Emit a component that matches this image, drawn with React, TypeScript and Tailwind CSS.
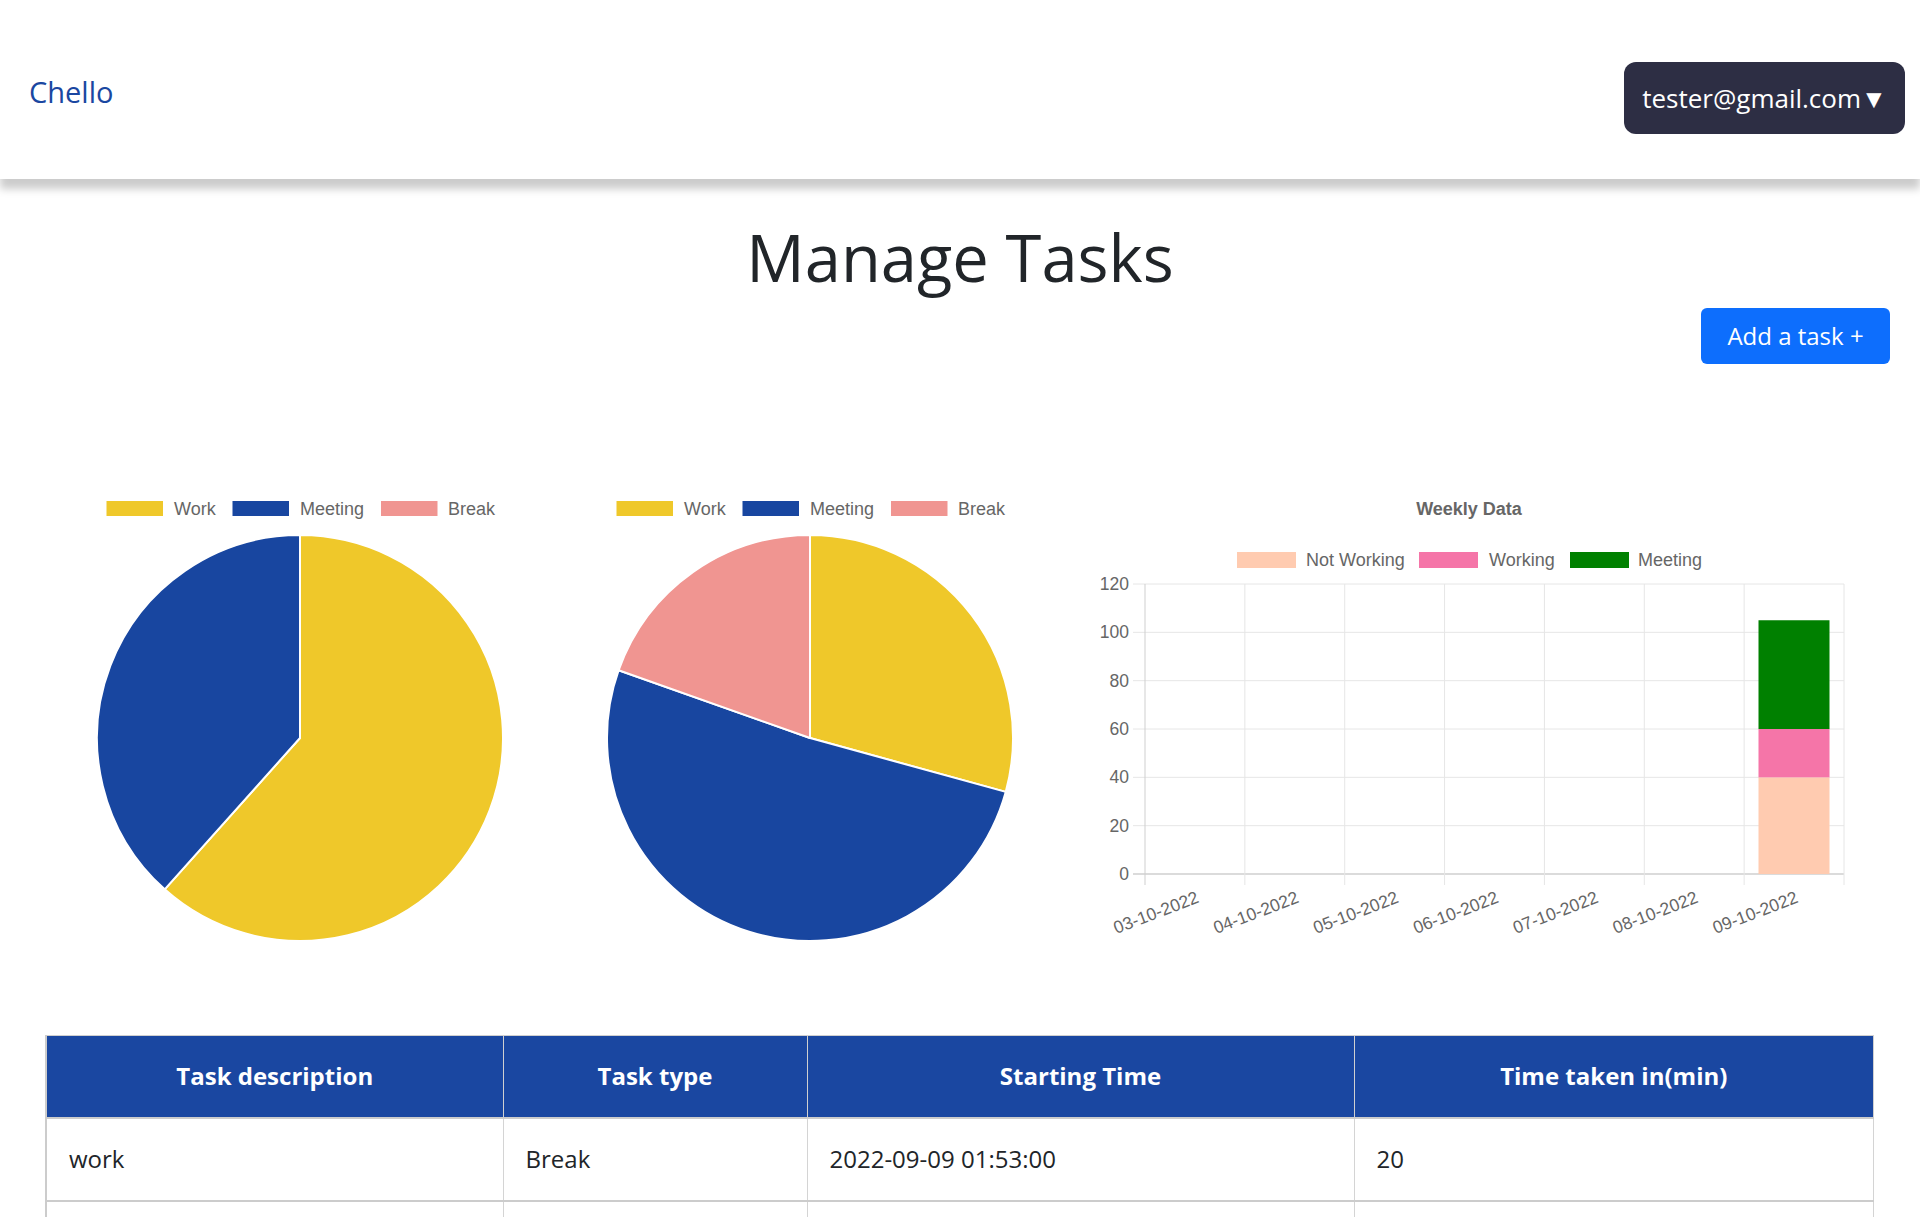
import React from "react";

const BLUE = "#1846a0";
const YELLOW = "#efc82a";
const PINK = "#f09591";

type Slice = { from: number; to: number; color: string };

function arcPath(cx: number, cy: number, r: number, from: number, to: number) {
  const rad = (d: number) => (d * Math.PI) / 180;
  const x0 = cx + r * Math.sin(rad(from));
  const y0 = cy - r * Math.cos(rad(from));
  const x1 = cx + r * Math.sin(rad(to));
  const y1 = cy - r * Math.cos(rad(to));
  const large = to - from > 180 ? 1 : 0;
  return `M ${cx} ${cy} L ${x0} ${y0} A ${r} ${r} 0 ${large} 1 ${x1} ${y1} Z`;
}

const pieLegend = [
  { label: "Work", color: YELLOW, box: 61.5, text: 129 },
  { label: "Meeting", color: BLUE, box: 187.5, text: 255 },
  { label: "Break", color: PINK, box: 336, text: 403 },
];

function PieChart({ slices }: { slices: Slice[] }) {
  return (
    <svg width={510} height={480} viewBox="0 0 510 480" className="shrink-0">
      {pieLegend.map((l) => (
        <g key={l.label}>
          <rect x={l.box} y={21} width={56.5} height={15} fill={l.color} />
          <text x={l.text} y={34.5} fontSize={18} fill="#666" fontFamily="'Liberation Sans', Arial, sans-serif">
            {l.label}
          </text>
        </g>
      ))}
      {slices.map((s, i) => (
        <path key={i} d={arcPath(255, 258, 203, s.from, s.to)} fill={s.color} stroke="#fff" strokeWidth={2} strokeLinejoin="round" />
      ))}
    </svg>
  );
}

const days = ["03-10-2022", "04-10-2022", "05-10-2022", "06-10-2022", "07-10-2022", "08-10-2022", "09-10-2022"];

function WeeklyChart() {
  const left = 65;
  const right = 764;
  const top = 104;
  const bottom = 394;
  const step = (right - left) / 7;
  const perUnit = (bottom - top) / 120;
  const font = "'Liberation Sans', Arial, sans-serif";
  const stack = [
    { v: 40, color: "#ffcbb0" },
    { v: 20, color: "#f575a8" },
    { v: 45, color: "#008000" },
  ];
  let acc = 0;
  return (
    <svg width={780} height={480} viewBox="0 0 780 480" className="shrink-0">
      <text x={389} y={35} fontSize={18} fontWeight="bold" fill="#666" textAnchor="middle" fontFamily={font}>
        Weekly Data
      </text>
      {[
        { label: "Not Working", color: "#ffcbb0", box: 157, text: 226 },
        { label: "Working", color: "#f575a8", box: 339, text: 409 },
        { label: "Meeting", color: "#008000", box: 490, text: 558 },
      ].map((l) => (
        <g key={l.label}>
          <rect x={l.box} y={72} width={59} height={16} fill={l.color} />
          <text x={l.text} y={86} fontSize={18} fill="#666" fontFamily={font}>
            {l.label}
          </text>
        </g>
      ))}
      {[0, 1, 2, 3, 4, 5, 6].map((k) => {
        const y = bottom - k * 20 * perUnit;
        return (
          <g key={k}>
            <line x1={53} x2={right} y1={y} y2={y} stroke={k === 0 ? "#cfcfcf" : "#e6e6e6"} strokeWidth={k === 0 ? 1.5 : 1} />
            <text x={49} y={y + 6} fontSize={17.5} fill="#666" textAnchor="end" fontFamily={font}>
              {k * 20}
            </text>
          </g>
        );
      })}
      {[0, 1, 2, 3, 4, 5, 6, 7].map((i) => {
        const x = left + i * step;
        return <line key={i} x1={x} x2={x} y1={top} y2={bottom + 11} stroke={i === 0 ? "#cfcfcf" : "#e6e6e6"} strokeWidth={1} />;
      })}
      {stack.map((s, i) => {
        const y = bottom - (acc + s.v) * perUnit;
        const h = s.v * perUnit;
        acc += s.v;
        return <rect key={i} x={678.5} y={y} width={71} height={h} fill={s.color} />;
      })}
      {days.map((d, i) => {
        const cx = left + (i + 0.5) * step + 5;
        const cy = 422;
        return (
          <text key={d} x={cx} y={cy} fontSize={17.5} fill="#666" textAnchor="end" fontFamily={font} transform={`rotate(-21 ${cx} ${cy})`}>
            {d}
          </text>
        );
      })}
    </svg>
  );
}

const rows = [
  ["work", "Break", "2022-09-09 01:53:00", "20"],
  ["\u00a0", "\u00a0", "\u00a0", "\u00a0"],
];

export default function App() {
  return (
    <div className="min-h-screen bg-white" style={{ fontFamily: "'Open Sans', 'Noto Sans', sans-serif" }}>
      <nav className="h-[179px] bg-white flex items-start justify-between shadow-[0_10px_8px_#cccccc] relative z-10">
        <a className="mt-[72px] ml-[29px] text-[29px] leading-[40px] font-medium text-[#1a47a1]">Chello</a>
        <button className="mt-[62px] mr-[15px] w-[281px] h-[72px] rounded-[12px] bg-[#2d2e44] text-white text-[26px] flex items-center justify-center">
          tester@gmail.com▼
        </button>
      </nav>

      <div className="flex flex-col">
        <h1 className="mt-[39px] text-center text-[65px] leading-[78px] font-normal text-[#212529]">Manage Tasks</h1>
        <div className="flex justify-end pr-[30px] mt-[12px]">
          <button className="w-[189px] h-[56px] rounded-[6px] bg-[#0d6efd] text-white text-[24px] flex items-center justify-center">
            Add a task +
          </button>
        </div>

        <div className="flex mt-[116px] pl-[45px]">
          <PieChart
            slices={[
              { from: 0, to: 221.8, color: YELLOW },
              { from: 221.8, to: 360, color: BLUE },
            ]}
          />
          <PieChart
            slices={[
              { from: 0, to: 105.4, color: YELLOW },
              { from: 105.4, to: 289.5, color: BLUE },
              { from: 289.5, to: 360, color: PINK },
            ]}
          />
          <div className="ml-[15px]">
            <WeeklyChart />
          </div>
        </div>

        <div className="mt-[75px] pl-[45px] pr-[46px]">
          <table className="w-full border-collapse border-l-2 border-[#cccccc] text-[24px] table-fixed">
            <thead>
              <tr className="bg-[#1a47a1] text-white h-[82px]">
                <th className="w-[457px] font-bold border border-[#d0d0d0] border-b-2 border-b-[#cccccc]">Task description</th>
                <th className="w-[304px] font-bold border border-[#d0d0d0] border-b-2 border-b-[#cccccc]">Task type</th>
                <th className="w-[547px] font-bold border border-[#d0d0d0] border-b-2 border-b-[#cccccc]">Starting Time</th>
                <th className="font-bold border border-[#d0d0d0] border-b-2 border-b-[#cccccc]">Time taken in(min)</th>
              </tr>
            </thead>
            <tbody>
              {rows.map((r, i) => (
                <tr key={i} className="h-[83px] text-[#212529]">
                  {r.map((c, j) => (
                    <td key={j} className="pl-[22px] border border-[#d4d4d4] border-b-2 border-b-[#cccccc]">
                      {c}
                    </td>
                  ))}
                </tr>
              ))}
            </tbody>
          </table>
        </div>
      </div>
    </div>
  );
}
